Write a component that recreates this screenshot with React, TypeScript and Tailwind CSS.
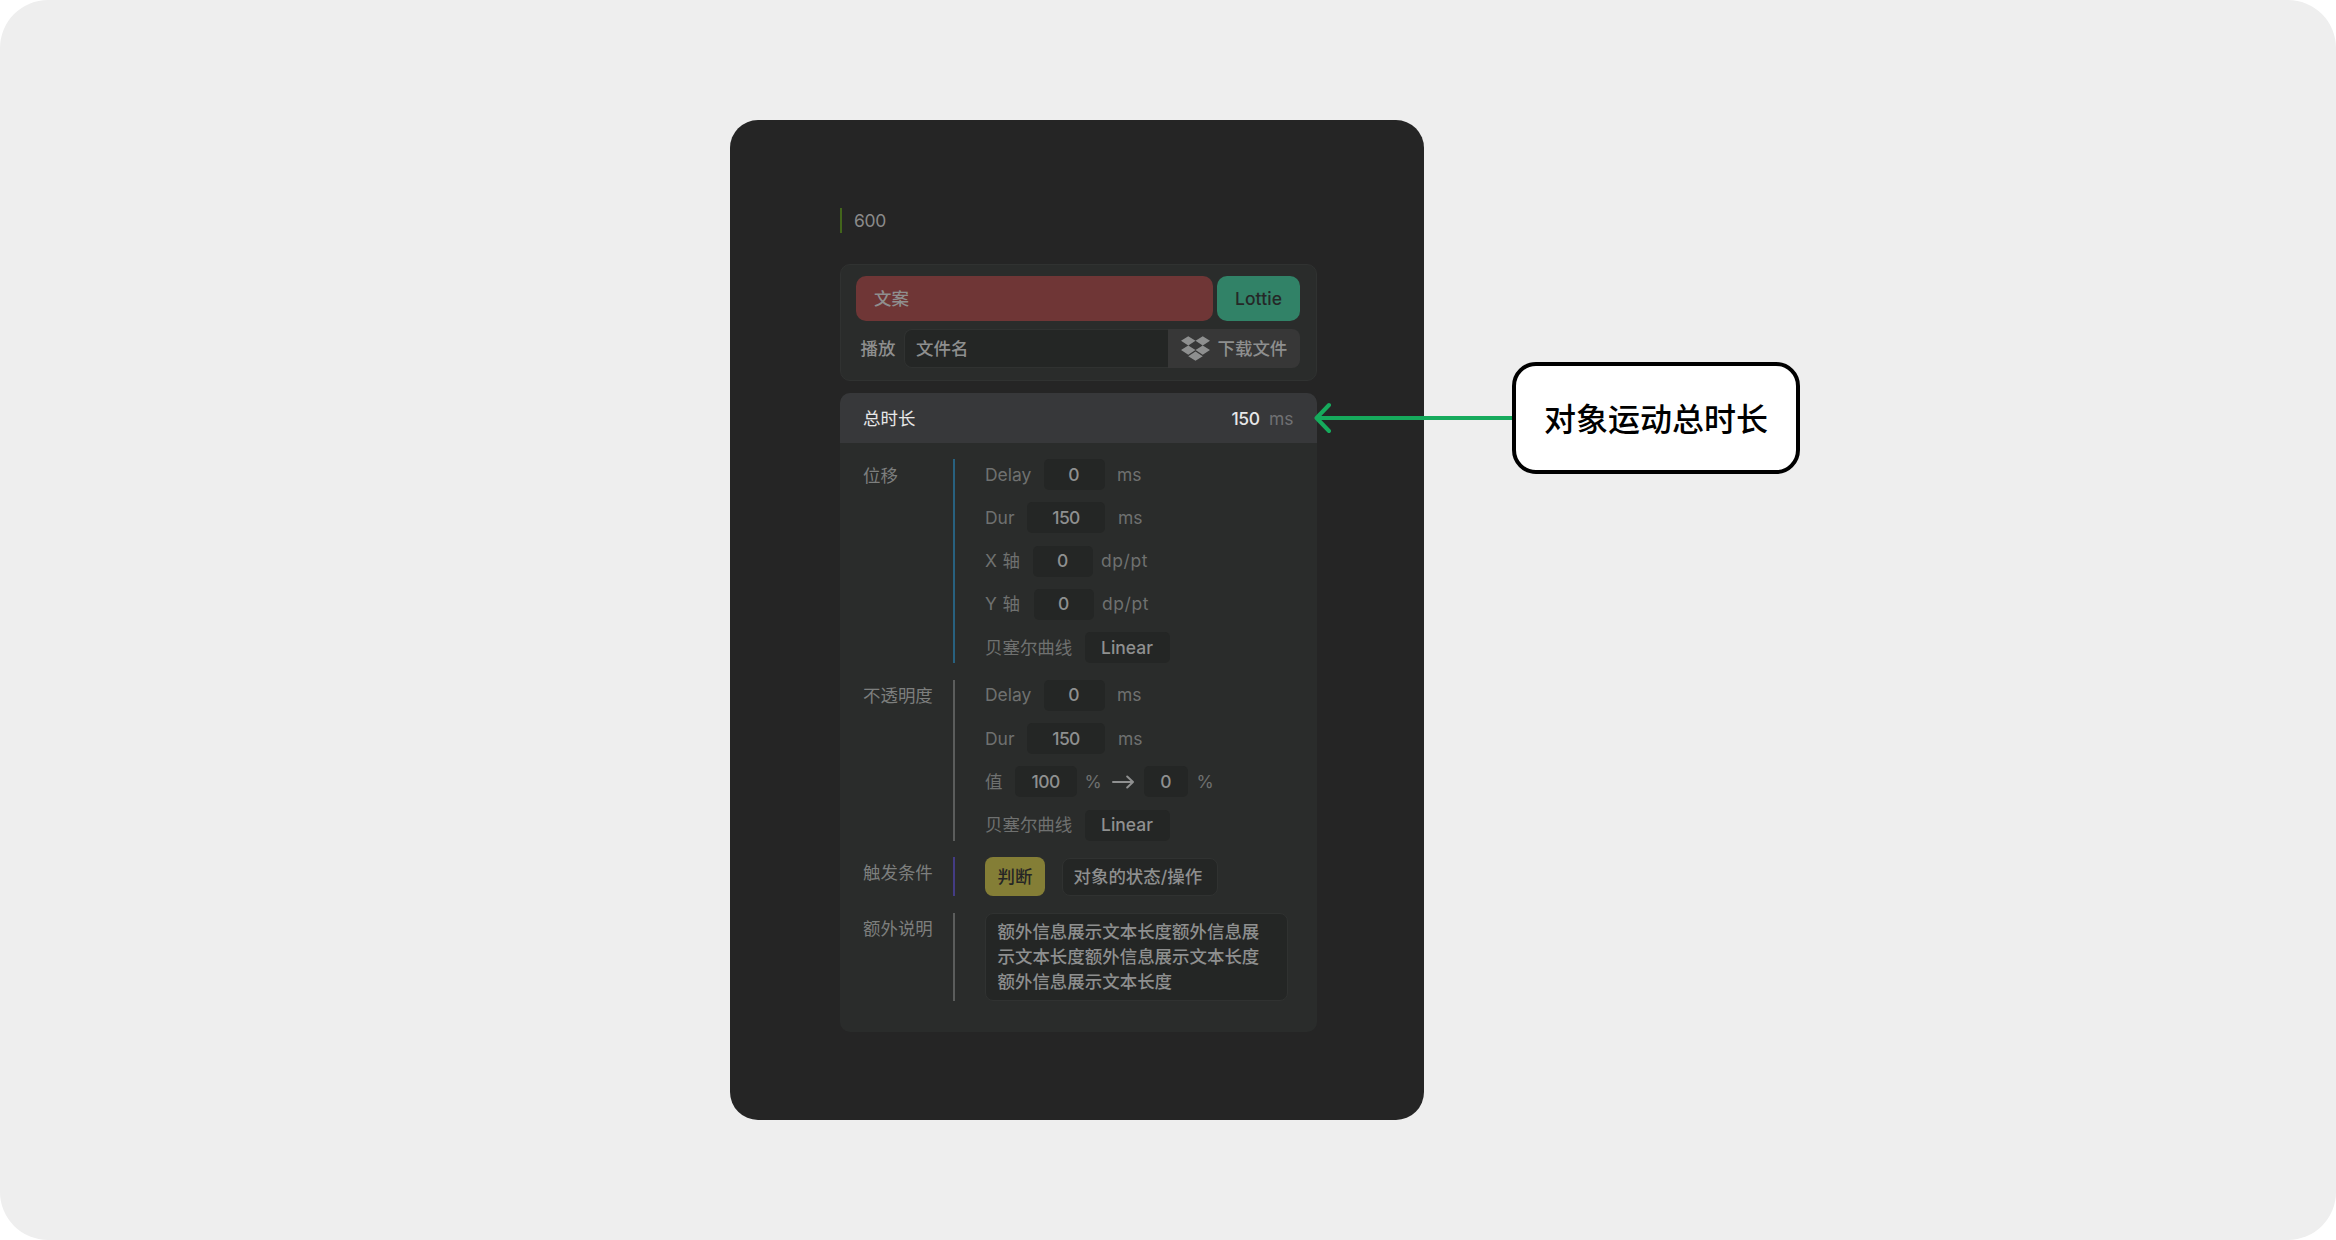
import * as React from "react";

type FieldRowProps = {
  label: string;
  labelClass: string;
  value: string;
  valueClass: string;
  unit?: string;
  unitClass?: string;
};

const Value = ({ className, children }: { className: string; children: React.ReactNode }) => (
  <div
    className={`flex h-[31px] shrink-0 items-center justify-center rounded-[5px] bg-[#242625] font-medium text-[#8f9090] ${className}`}
  >
    {children}
  </div>
);

const FieldRow = ({ label, labelClass, value, valueClass, unit, unitClass }: FieldRowProps) => (
  <div className="flex h-[31px] items-center text-[#6f7170]">
    <span className={`shrink-0 ${labelClass}`}>{label}</span>
    <Value className={valueClass}>{value}</Value>
    {unit && <span className={unitClass}>{unit}</span>}
  </div>
);

type SectionProps = {
  title: string;
  line: string;
  titleClass?: string;
  children: React.ReactNode;
};

const Section = ({ title, line, titleClass = "pt-[3px]", children }: SectionProps) => (
  <section className="flex">
    <div className={`w-[90px] shrink-0 text-[#7d7f7e] ${titleClass}`}>{title}</div>
    <div className={`w-[2px] shrink-0 ${line}`} />
    <div className="ml-[30px] flex flex-col gap-[12.33px]">{children}</div>
  </section>
);

const DropboxIcon = () => (
  <svg viewBox="0 1.8 24 20.4" className="h-[25px] w-[29px] shrink-0" fill="currentColor">
    <path d="M6 1.807 0 5.629l6 3.822 6-3.822zM18 1.807l-6 3.822 6 3.822 6-3.822zM0 13.274l6 3.822 6-3.822-6-3.822zM18 9.452l-6 3.822 6 3.822 6-3.822zM6 18.371l6 3.822 6-3.822-6-3.822z" />
  </svg>
);

const ArrowIcon = () => (
  <svg
    viewBox="0 0 22 14"
    className="mr-[10px] ml-[10px] h-[14px] w-[22px] shrink-0"
    fill="none"
    stroke="#8f9090"
    strokeWidth="2"
    strokeLinecap="round"
    strokeLinejoin="round"
  >
    <path d="M1 7h20M15.2 1.5 21 7l-5.8 5.5" />
  </svg>
);

const AssetCard = () => (
  <div className="h-[117px] rounded-[10px] border border-[#303231] bg-[#2a2c2b] pt-[11px] pl-[15px]">
    <div className="flex h-[45px] gap-[4px]">
      <div className="flex w-[357px] items-center rounded-[10px] bg-[#6f3636] pl-[18px] font-medium text-[#8f8f8f]">
        文案
      </div>
      <div className="flex w-[83px] items-center justify-center rounded-[10px] bg-[#318267] font-medium tracking-[0.1px] text-[#252827]">
        Lottie
      </div>
    </div>
    <div className="mt-[8px] flex h-[39px] items-center font-medium text-[#8e8f8f]">
      <span className="w-[48px] shrink-0 pt-[1px] pl-[4.5px]">播放</span>
      <div className="flex h-full w-[264px] items-center rounded-l-[8px] border border-r-0 border-[#303231] bg-[#242625] pt-[1px] pl-[11px]">
        文件名
      </div>
      <div className="flex h-full w-[132px] items-center gap-[8px] rounded-r-[8px] bg-[#373737] pl-[12.5px]">
        <DropboxIcon />
        <span className="pt-[1px]">下载文件</span>
      </div>
    </div>
  </div>
);

const MotionCard = () => (
  <div className="mt-[12px] h-[638.5px] overflow-hidden rounded-[10px] bg-[#2a2c2b]">
    <div className="flex h-[49.5px] items-center bg-[#37383a] pt-[2px] pl-[23px] text-[#e7e7e8]">
      <span className="w-[368.5px]">总时长</span>
      <span className="w-[37.5px] font-medium tracking-[-0.4px]">150</span>
      <span className="text-[#707173]">ms</span>
    </div>
    <div className="flex flex-col gap-[16.5px] pt-[16.5px] pl-[23px]">
      <Section title="位移" line="bg-[#28617f]" titleClass="pt-[4px]">
        <FieldRow label="Delay" labelClass="w-[58.5px]" value="0" valueClass="w-[61px]" unit="ms" unitClass="pl-[12.5px]" />
        <FieldRow label="Dur" labelClass="w-[42px]" value="150" valueClass="w-[78px] tracking-[-0.6px]" unit="ms" unitClass="pl-[13px]" />
        <FieldRow label="X 轴" labelClass="w-[47.5px] tracking-[0.4px]" value="0" valueClass="w-[60.5px]" unit="dp/pt" unitClass="pl-[8px] tracking-[0.6px]" />
        <FieldRow label="Y 轴" labelClass="w-[48.5px] tracking-[0.4px]" value="0" valueClass="w-[60.5px]" unit="dp/pt" unitClass="pl-[8px] tracking-[0.6px]" />
        <FieldRow label="贝塞尔曲线" labelClass="w-[99.5px]" value="Linear" valueClass="w-[85px]" />
      </Section>
      <Section title="不透明度" line="bg-[#5b5d5c]">
        <FieldRow label="Delay" labelClass="w-[58.5px]" value="0" valueClass="w-[61px]" unit="ms" unitClass="pl-[12.5px]" />
        <FieldRow label="Dur" labelClass="w-[42px]" value="150" valueClass="w-[78px] tracking-[-0.6px]" unit="ms" unitClass="pl-[13px]" />
        <div className="flex h-[31px] items-center text-[#6f7170]">
          <span className="w-[30px] shrink-0">值</span>
          <Value className="w-[61.5px] tracking-[-0.5px]">100</Value>
          <span className="w-[25.5px] pl-[8px]">%</span>
          <ArrowIcon />
          <Value className="w-[44px]">0</Value>
          <span className="pl-[8.5px]">%</span>
        </div>
        <FieldRow label="贝塞尔曲线" labelClass="w-[99.5px]" value="Linear" valueClass="w-[85px]" />
      </Section>
      <Section title="触发条件" line="bg-[#443c84]">
        <div className="flex h-[39px] items-center gap-[16.5px]">
          <div className="flex h-full w-[60px] items-center justify-center rounded-[8px] bg-[#847e36] font-medium text-[#252525]">
            判断
          </div>
          <div className="flex h-[38px] w-[156px] items-center rounded-[8px] border border-[#303231] bg-[#242625] pl-[11px] font-medium whitespace-nowrap text-[#8e8f8f]">
            对象的状态/操作
          </div>
        </div>
      </Section>
      <Section title="额外说明" line="bg-[#5b5d5c]">
        <div className="h-[88px] w-[302.5px] rounded-[8px] border border-[#303231] bg-[#242625] pt-[6.5px] pr-[22px] pl-[11.5px] leading-[24.7px] font-medium text-[#8e8f8f]">
          额外信息展示文本长度额外信息展示文本长度额外信息展示文本长度额外信息展示文本长度
        </div>
      </Section>
    </div>
  </div>
);

const Panel = () => (
  <div className="h-[1000px] w-[694px] shrink-0 rounded-[28px] bg-[#252525] px-[110px] pt-[88px] text-[17.47px] leading-[26px]">
    <div className="w-[477px]">
      <div className="flex h-[25px] items-center border-l-2 border-[#42651b] pl-[12px] tracking-[-0.3px] text-[#8b8b8b]">
        600
      </div>
      <div className="pt-[31px]">
        <AssetCard />
      </div>
      <MotionCard />
    </div>
  </div>
);

const Callout = () => (
  <div className="relative mt-[242px] ml-[88px] flex h-[112px] w-[288px] shrink-0 items-center justify-center rounded-[24px] border-4 border-black bg-white text-[32px] font-medium text-black">
    <span className="pt-[3px]">对象运动总时长</span>
    <svg
      viewBox="0 0 200 32"
      className="absolute top-[36px] left-[-204px] h-[32px] w-[200px]"
      fill="none"
      stroke="#16aa5c"
      strokeWidth="4"
      strokeLinecap="round"
      strokeLinejoin="round"
    >
      <path d="M200 16H5M17 3 4.5 16 17 29" />
    </svg>
  </div>
);

const App = () => (
  <main className="flex h-[1240px] w-[2336px] items-start overflow-hidden rounded-[48px] bg-[#eeeeee] pt-[120px] pl-[730px] font-['Inter','Noto_Sans_CJK_SC',sans-serif]">
    <Panel />
    <Callout />
  </main>
);

export default App;
